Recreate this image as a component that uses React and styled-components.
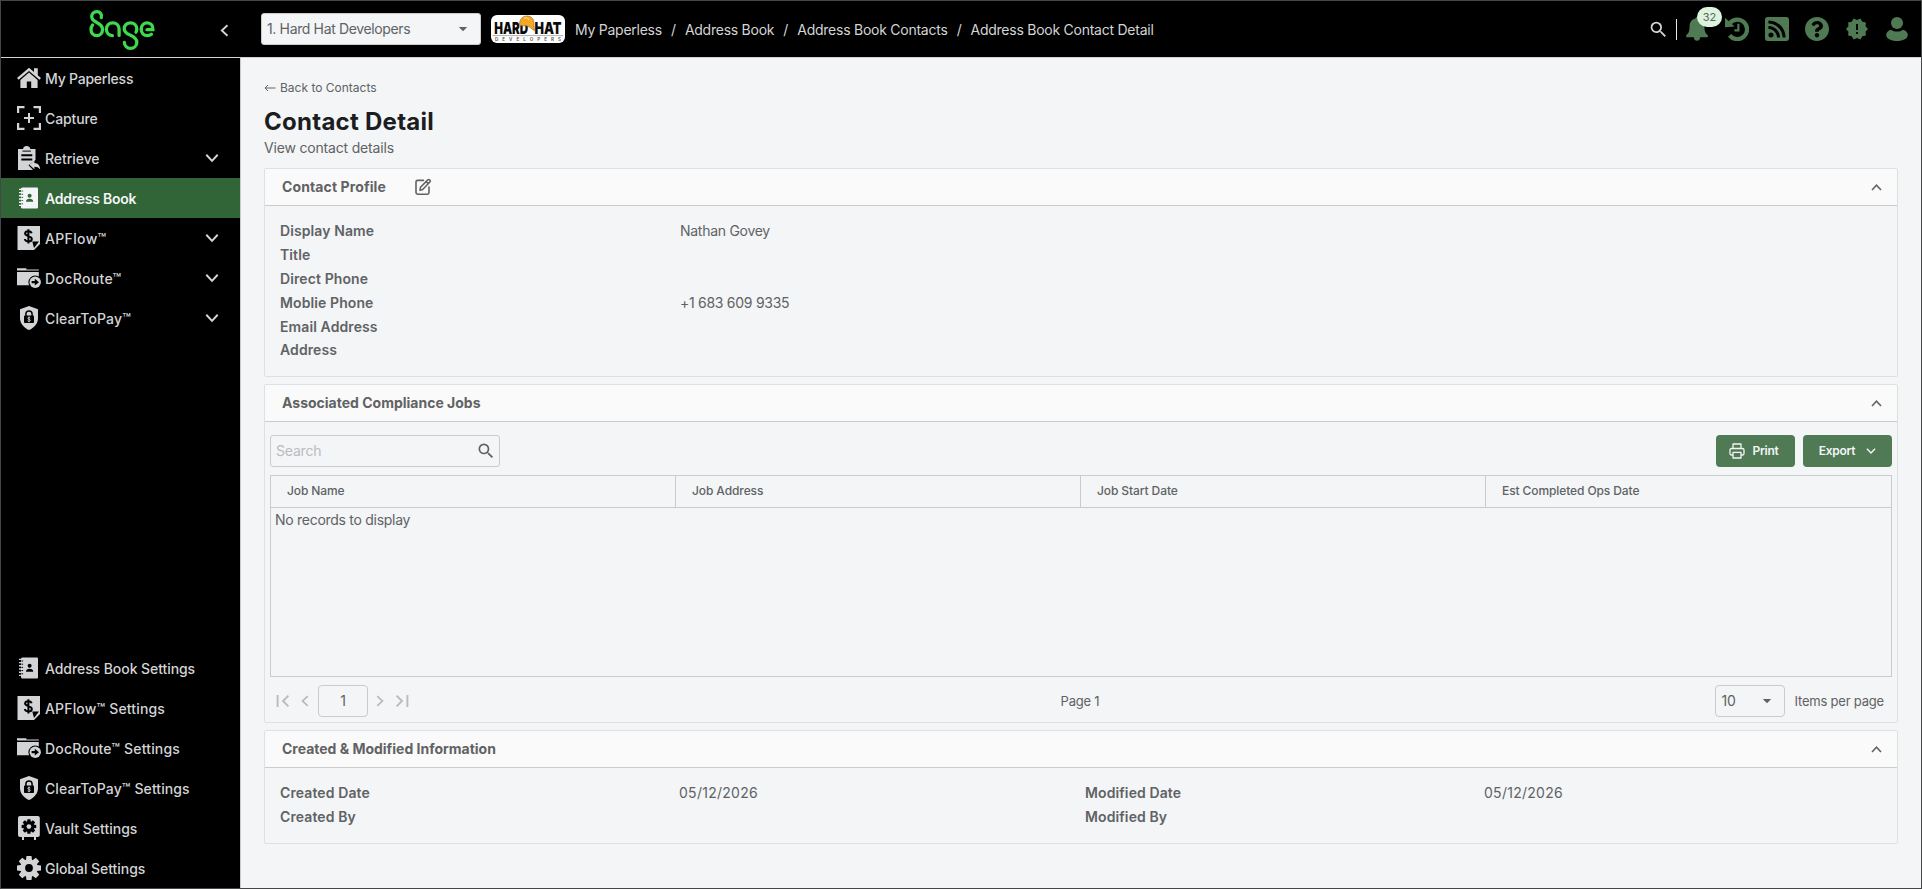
import React from "react";
import styled, { createGlobalStyle } from "styled-components";
import { FaQuestionCircle, FaRssSquare } from "react-icons/fa";
import { MdNewReleases, MdSearch } from "react-icons/md";

const c = {
  text: "#606264",
  bg: "#f3f5f7",
  line: "#c9cbcd",
  soft: "#dfe0e2",
  green: "#4f7a54",
  active: "#316437",
  nav: "#d3d4d6",
};

const GlobalStyle = createGlobalStyle`
  * { box-sizing: border-box; }
  body { margin: 0; background: ${c.bg}; }
  button, input { font: inherit; color: inherit; }
`;

/* ---------- shell ---------- */

const Shell = styled.div`
  height: 889px;
  width: 1922px;
  border: 1px solid #444648;
  display: flex;
  flex-direction: column;
  font: 400 14px/20px Inter, "Liberation Sans", sans-serif;
  color: ${c.text};
  background: ${c.bg};
  overflow: hidden;
`;

const Header = styled.header`
  height: 57px;
  flex: none;
  display: flex;
  align-items: center;
  background: #000;
  border-bottom: 1px solid #d3d2d4;
`;

const Brand = styled.div`
  width: 239px;
  height: 56px;
  flex: none;
  display: flex;
  align-items: center;
  padding: 2px 0 0 87px;
  gap: 62px;
`;

const Body = styled.div`
  flex: 1;
  min-height: 0;
  display: flex;
`;

const Sidebar = styled.nav`
  width: 240px;
  flex: none;
  background: #000;
  border-right: 1px solid ${c.line};
  display: flex;
  flex-direction: column;
  justify-content: space-between;
`;

const NavItem = styled.a`
  height: 40px;
  padding: 0 21px 0 16px;
  display: flex;
  align-items: center;
  gap: 4px;
  color: ${(p) => (p.$active ? "#f3f5f7" : c.nav)};
  background: ${(p) => (p.$active ? c.active : "transparent")};
  font-weight: ${(p) => (p.$active ? 600 : 500)};
  letter-spacing: ${(p) => p.$ls || 0}px;
  svg { flex: none; display: block; }
`;

const NavLabel = styled.span`
  flex: 1;
  padding-top: 1px;
  white-space: nowrap;
`;

/* ---------- header parts ---------- */

const CompanySelect = styled.div`
  width: 220px;
  height: 32px;
  margin-left: 21px;
  padding: 0 11px 0 5px;
  display: flex;
  align-items: center;
  justify-content: space-between;
  background: ${c.bg};
  border: 1px solid ${c.line};
  border-radius: 3px;
  letter-spacing: -0.36px;
`;

const CompanyLogo = styled.div`
  width: 74px;
  height: 28px;
  margin: 0 10px;
  background: #fff;
  border-radius: 6px;
  svg { display: block; }
`;

const Crumbs = styled.div`
  display: flex;
  align-items: center;
  color: ${c.nav};
  white-space: nowrap;
  padding-top: 2px;
  letter-spacing: -0.25px;
`;

const Slash = styled.span`
  width: 23px;
  text-align: center;
`;

const Actions = styled.div`
  margin-left: auto;
  padding-right: 12px;
  display: flex;
  align-items: center;
  gap: 16px;
  color: ${c.green};
  svg { display: block; }
`;

const SearchGroup = styled.div`
  display: flex;
  align-items: center;
  gap: 7px;
  margin-right: -8px;
  color: ${c.nav};
`;

const Divider = styled.span`
  width: 1px;
  height: 21px;
  background: #e3e4e5;
`;

const Bell = styled.div`
  position: relative;
  width: 24px;
  height: 24px;
`;

const Badge = styled.span`
  position: absolute;
  left: 12px;
  top: -10px;
  width: 25px;
  height: 20px;
  border-radius: 10px;
  background: #dcf3de;
  color: #5a635b;
  font-size: 11px;
  line-height: 20px;
  text-align: center;
`;

/* ---------- content ---------- */

const Main = styled.main`
  flex: 1;
  padding: 20px 23px 0 23px;
  display: flex;
  flex-direction: column;
`;

const BackLink = styled.a`
  display: flex;
  align-items: center;
  gap: 4px;
  font-size: 12px;
  height: 20px;
`;

const Title = styled.h1`
  margin: 9px 0 0;
  font-size: 24px;
  line-height: 30px;
  font-weight: 700;
  letter-spacing: 0.27px;
  color: #1b1d1f;
`;

const Subtitle = styled.p`
  margin: 1px 0 10px;
  letter-spacing: -0.18px;
`;

const Panel = styled.section`
  height: ${(p) => p.$h}px;
  margin-bottom: 7px;
  border: 1px solid ${c.soft};
  border-radius: 2px;
  flex: none;
`;

const PanelHead = styled.div`
  height: 37px;
  padding: 0 15px 0 17px;
  display: flex;
  align-items: center;
  background: #fafafa;
  border-bottom: 1px solid ${c.line};
  svg { display: block; }
`;

const PanelTitle = styled.h2`
  margin: 0 28px 0 0;
  flex: ${(p) => (p.$fill ? 1 : "none")};
  font-size: 14px;
  line-height: 20px;
  font-weight: 700;
  letter-spacing: ${(p) => p.$ls || 0}px;
`;

const HeadSpacer = styled.span`
  flex: 1;
`;

const Fields = styled.dl`
  margin: 0;
  padding: 13.6px 15px;
  display: grid;
  grid-template-columns: ${(p) => p.$cols};
  grid-auto-rows: 23.8px;
  align-items: center;
`;

const Label = styled.dt`
  font-weight: 600;
  letter-spacing: 0.1px;
`;

const Value = styled.dd`
  margin: 0;
  letter-spacing: ${(p) => p.$ls || 0}px;
`;

const Toolbar = styled.div`
  margin: 13px 5px 8px;
  height: 32px;
  display: flex;
  align-items: center;
  gap: 8px;
`;

const SearchBox = styled.div`
  width: 230px;
  height: 32px;
  margin-right: auto;
  padding: 0 3px 0 5px;
  display: flex;
  align-items: center;
  justify-content: space-between;
  border: 1px solid ${c.line};
  border-radius: 3px;
`;

const Placeholder = styled.span`
  color: #b9bcbf;
  letter-spacing: -0.2px;
`;

const Button = styled.button`
  width: ${(p) => p.$w}px;
  height: 32px;
  padding: 0 ${(p) => p.$pr || 0}px 0 0;
  border: 0;
  border-radius: 4px;
  background: ${c.green};
  color: #f3f5f7;
  font-size: 12px;
  font-weight: 600;
  letter-spacing: -0.3px;
  display: flex;
  align-items: center;
  justify-content: center;
  gap: ${(p) => p.$gap}px;
`;

const Table = styled.div`
  margin: 0 5px;
  height: 202px;
  border: 1px solid ${c.line};
`;

const TableHead = styled.div`
  height: 32px;
  display: grid;
  grid-template-columns: 404px 405px 405px 1fr;
  border-bottom: 1px solid ${c.line};
`;

const Th = styled.div`
  padding: 0 0 1px 16px;
  display: flex;
  align-items: center;
  font-size: 12px;
  font-weight: 500;
  letter-spacing: -0.1px;
  & + & { border-left: 1px solid ${c.line}; }
`;

const Empty = styled.div`
  padding: 2px 4px;
  letter-spacing: -0.28px;
`;

const Pager = styled.div`
  height: 48px;
  padding: 0 13px 0 11px;
  display: grid;
  grid-template-columns: 1fr auto 1fr;
  align-items: center;
  font-size: 13px;
  letter-spacing: -0.2px;
`;

const PagerGroup = styled.div`
  display: flex;
  align-items: center;
  justify-content: ${(p) => (p.$end ? "flex-end" : "flex-start")};
  gap: ${(p) => (p.$end ? 9 : 0)}px;
  color: ${(p) => (p.$end ? "inherit" : "#b9bbbe")};
`;

const PageBox = styled.span`
  width: 50px;
  height: 32px;
  margin: 0 6px 0 7px;
  display: flex;
  align-items: center;
  justify-content: center;
  border: 1px solid ${c.line};
  border-radius: 4px;
  color: ${c.text};
  font-size: 14px;
`;

const Gap = styled.span`
  width: ${(p) => p.$w}px;
`;

const SizeSelect = styled.span`
  width: 70px;
  height: 32px;
  padding: 0 11px 0 5px;
  display: flex;
  align-items: center;
  justify-content: space-between;
  border: 1px solid ${c.line};
  border-radius: 4px;
  font-size: 14px;
`;

/* ---------- drawings ---------- */

const SageLogo = () => (
  <svg width="68" height="44" viewBox="88 9 68 44" fill="none" stroke="#3ed94e" strokeWidth="3.3" strokeLinecap="round">
    <path d="M101.3 18.6 C102 15.2 100 12.6 96.9 12.6 C93.6 12.6 91.7 15 91.7 17.6 C91.7 21 94.2 22.3 97.2 23.8 C100.8 25.6 102.5 27.3 102.5 30.4 C102.5 34 100 36.6 96.8 36.6 C93.5 36.6 91 34 91 30.5 C91 28.8 91.6 27.2 92.6 26" />
    <path d="M112.4 36.6 C108.8 36.4 106.4 33.7 106.4 30.2 C106.4 26.5 109.1 23.8 112.7 23.8 C116.4 23.8 119.1 26.5 119.1 30.2 V36.4" />
    <path d="M136 33.2 C136.6 32.3 136.8 31.2 136.8 30 C136.8 26.4 134.2 23.8 130.5 23.8 C126.9 23.8 124.2 26.4 124.2 29.7 C124.2 33.2 126.9 34.6 130 36 C134 37.7 136.8 39.3 136.8 43.2 C136.8 46.8 134.1 49.4 130.5 49.4 C126.9 49.4 124.4 46.8 124.4 43.4" />
    <path d="M147 30.7 H152.9 C153.2 26.8 151 23.8 147.3 23.8 C143.8 23.8 141.2 26.5 141.2 30.2 C141.2 33.9 143.8 36.6 147.4 36.6 C149 36.6 150.3 36.1 151.4 35.2" />
  </svg>
);

const CompanyMark = () => (
  <svg width="74" height="28" viewBox="0 0 74 28">
    <g fontFamily="Inter, sans-serif">
      <text x="3.2" y="18.6" textLength="34" lengthAdjust="spacingAndGlyphs" fontWeight="900" fontSize="16.5" fill="#0b0b0b">HARD</text>
      <text x="43.5" y="18.6" textLength="27" lengthAdjust="spacingAndGlyphs" fontWeight="900" fontSize="16.5" fill="#0b0b0b">HAT</text>
      <text x="4" y="26.4" textLength="66" fontWeight="600" fontSize="4.6" fill="#555">DEVELOPERS</text>
    </g>
    <path d="M28.6 9 C28.6 4 32 1 36 1 C40.6 1 43.4 4.6 42.8 8.6 L43.4 15.6 C41.4 14.8 39.6 12.2 37 11.2 C34 10.2 31 11.4 29 10.4 Z" fill="#f2a826" stroke="#8a641c" strokeWidth=".6" />
    <path d="M33 3.2 C35 2 37 2.6 38 5" stroke="#ffd377" strokeWidth="1.3" fill="none" />
    <path d="M1.5 20.6 H72.5" stroke="#a9a9a9" strokeWidth=".9" />
  </svg>
);

const Chevron = ({ d = "down", w = 14, stroke = 2, color = "currentColor" }) => {
  const turn = { down: 0, left: 90, up: 180, right: 270 }[d];
  return (
    <svg width={w} height={w} viewBox="0 0 14 14" fill="none" stroke={color} strokeWidth={stroke}>
      <path d="M1.3 3.8 L7 9.9 L12.7 3.8" transform={`rotate(${turn} 7 7)`} />
    </svg>
  );
};

const Caret = () => (
  <svg width="12" height="6" viewBox="0 0 12 6">
    <path d="M1.8 1 H10.2 L6 5.2 Z" fill={c.text} />
  </svg>
);

const Icon = ({ children }) => (
  <svg width="24" height="24" viewBox="0 0 24 24" fill="currentColor">{children}</svg>
);

const HomeIcon = () => (
  <Icon>
    <path d="M12 1.8 L0 12 L1.6 13.8 L12 5 L22.4 13.8 L24 12 L20.8 9.2 V2.2 H17 V6 Z" />
    <path d="M12 6.6 L3.4 13.9 V22 H9.8 V15.5 H14.2 V22 H20.6 V13.9 Z" />
  </Icon>
);
const CaptureIcon = () => (
  <Icon>
    <path d="M0 0h7.5v2.2H2.2V7H0zM16.5 0H24v7h-2.2V2.2h-5.3zM0 17h2.2v4.8h5.3V24H0zM21.8 17H24v7h-7.5v-2.2h5.3zM11 7h2v4h4v2h-4v4h-2v-4H7v-2h4z" />
  </Icon>
);
const RetrieveIcon = () => (
  <Icon>
    <path fillRule="evenodd" d="M1 3 H6 C6.3 1 7.6 0 9.6 0 S13 1 13.4 3 H18.5 V14 L11.5 19.2 L16 24 H1 Z M4.3 8.2 V10.2 H15.3 V8.2 Z M4.3 12.4 V14.4 H15.3 V12.4 Z" />
    <path d="M12.4 18.8 L17.4 14.4 V17 C21 17.2 23 19.4 23.2 23.6 C21.6 21.4 20 20.8 17.4 20.8 V23.2 Z" />
    <path d="M5.5 4.6h8.4v1h-8.4z" fill="#000" />
  </Icon>
);
const BookIcon = ({ hole = "#000" }) => (
  <Icon>
    <path d="M5.5 1.5 H20 Q21 1.5 21 2.5 V21.5 Q21 22.5 20 22.5 H5.5 Q4 22.5 4 21 V3 Q4 1.5 5.5 1.5 Z" />
    <path d="M2 3.4h4M2 6.6h4M2 9.8h4M2 13h4M2 16.2h4M2 19.4h4" stroke="currentColor" strokeWidth="1.4" />
    <path d="M4.5 5h1.6M4.5 8.2h1.6M4.5 11.4h1.6M4.5 14.6h1.6M4.5 17.8h1.6" stroke={hole} strokeWidth="1" />
    <circle cx="12.6" cy="9.8" r="2" fill={hole} />
    <path d="M9 15.8 C9 13.4 10.5 12.7 12.6 12.7 S16.2 13.4 16.2 15.8 Z" fill={hole} />
  </Icon>
);
const FlowIcon = () => (
  <Icon>
    <path d="M.5 0 H23 V18 L17 24 H.5 Z" />
    <path d="M15.3 15.6 H22 L17 22 Z" fill="#000" />
    <path d="M14.6 7.3 C14.3 5.9 13 5.2 11.4 5.2 C9.4 5.2 8.1 6.1 8.1 7.6 C8.1 10.9 14.8 9.3 14.8 12.9 C14.8 14.5 13.4 15.4 11.4 15.4 C9.5 15.4 8.1 14.6 7.9 13 M11.4 3.2 V17.4" fill="none" stroke="#000" strokeWidth="2" />
  </Icon>
);
const FolderIcon = () => (
  <Icon>
    <path d="M0 2.2 H9.3 V3.4 H21.8 V4.6 H0 Z M0 6 H21.8 V19.3 H0 Z" />
    <circle cx="18.2" cy="16.2" r="6.8" fill="#000" />
    <circle cx="18.2" cy="16.2" r="5.7" />
    <path d="M14.6 15.1 H17.8 V12.8 L22 16.2 L17.8 19.6 V17.3 H14.6 Z" fill="#000" />
  </Icon>
);
const ShieldIcon = () => (
  <Icon>
    <path d="M12 0 L21 3.2 V12 C21 17.5 17 22 12 24 C7 22 3 17.5 3 12 V3.2 Z" />
    <rect x="7" y="9.6" width="10" height="7.4" rx=".8" fill="#000" />
    <path d="M8.9 10 V8 C8.9 3.9 15.1 3.9 15.1 8 V10" fill="none" stroke="#000" strokeWidth="1.5" />
    <path d="M13.3 11.9 C12.6 11 10.8 11.2 10.8 12.3 C10.8 13.5 13.3 13 13.3 14.4 C13.3 15.5 11.3 15.8 10.6 14.7 M12 10.6 V16.2" fill="none" stroke="currentColor" strokeWidth=".9" />
  </Icon>
);
const teeth = [0, 45, 90, 135, 180, 225, 270, 315];
const Gear = ({ fill = "currentColor", hole = "#000" }) => (
  <g fill={fill}>
    {teeth.map((a) => (
      <path key={a} d="M9.5 0 H14.5 L15.3 6 H8.7 Z" transform={`rotate(${a} 12 12)`} />
    ))}
    <circle cx="12" cy="12" r="8.8" />
    <circle cx="12" cy="12" r="3.9" fill={hole} />
  </g>
);
const GearIcon = () => <Icon><Gear /></Icon>;
const VaultIcon = () => (
  <Icon>
    <path d="M3 0 H20.8 Q22.8 0 22.8 2 V19 Q22.8 21 20.8 21 H19 V24 H17 V21 H7 V24 H5 V21 H3 Q1 21 1 19 V2 Q1 0 3 0 Z" />
    <g transform="translate(4.6 3.2) scale(.61)"><Gear fill="#000" hole={c.nav} /></g>
  </Icon>
);

const BellIcon = () => (
  <Icon>
    <path d="M12 0 C12.9 0 13.5 .7 13.5 1.6 C17.4 2.4 19.4 5.3 19.4 9.2 C19.4 14.2 20.6 16.4 22.8 18.2 V20.2 H15.2 C15 22.6 13.8 23.8 12 23.8 S9 22.6 8.8 20.2 H1.2 V18.2 C3.4 16.4 4.6 14.2 4.6 9.2 C4.6 5.3 6.6 2.4 10.5 1.6 C10.5 .7 11.1 0 12 0 Z" />
  </Icon>
);
const HistoryIcon = () => (
  <Icon>
    <path d="M5 5.8 A9.8 9.8 0 1 1 4.6 18.4" fill="none" stroke="currentColor" strokeWidth="4.2" />
    <path d="M0 .8 L9.6 9.6 L0 10.2 Z" />
    <path d="M13.4 6.8 V13.3 H9.4" fill="none" stroke="currentColor" strokeWidth="2.2" />
  </Icon>
);
const UserIcon = () => (
  <Icon>
    <circle cx="12" cy="6" r="6" />
    <path d="M6 12.7 C7.6 14 9.6 14.6 12 14.6 S16.4 14 18 12.7 C21 13.6 22.8 15.6 22.8 18 C22.8 21.6 18.2 24 12 24 S1.2 21.6 1.2 18 C1.2 15.6 3 13.6 6 12.7 Z" />
  </Icon>
);
const EditIcon = () => (
  <svg width="18" height="18" viewBox="0 0 18 18" fill="none" stroke={c.text} strokeWidth="1.6" strokeLinejoin="round" strokeLinecap="round">
    <path d="M9.5 2.4 H3.6 Q2 2.4 2 4 V14.6 Q2 16.2 3.6 16.2 H13.4 Q15 16.2 15 14.6 V9" />
    <path d="M6 12.2 L6.5 9.3 L13.8 1.9 Q14.7 1.1 15.6 1.9 L15.9 2.2 Q16.8 3.1 15.9 4 L8.7 11.5 Z M12.2 3.6 L14.3 5.6" />
  </svg>
);
const PrintIcon = () => (
  <svg width="16" height="16" viewBox="0 0 16 16" fill="none" stroke="currentColor" strokeWidth="1.3" strokeLinejoin="round">
    <path d="M4 5.5 V1 H12 V5.5 M4 12 H2.6 Q1 12 1 10.4 V7.1 Q1 5.5 2.6 5.5 H13.4 Q15 5.5 15 7.1 V10.4 Q15 12 13.4 12 H12 M4 9.3 H12 V15 H4 Z" />
  </svg>
);
const EdgeIcon = ({ last }) => (
  <svg width="14" height="14" viewBox="0 0 14 14" fill="none" stroke="currentColor" strokeWidth="1.9">
    <g transform={last ? "rotate(180 7 7)" : undefined}>
      <path d="M1.6 1 V13 M12.4 1.6 L7 7 L12.4 12.4" />
    </g>
  </svg>
);
const BackArrow = () => (
  <svg width="12" height="8" viewBox="0 0 12 8" fill="none" stroke={c.text} strokeWidth="1">
    <path d="M11.5 4 H1 M4 1 L1 4 L4 7" />
  </svg>
);

/* ---------- data ---------- */

const topNav = [
  { label: "My Paperless", icon: <HomeIcon />, ls: -0.22 },
  { label: "Capture", icon: <CaptureIcon />, ls: -0.1 },
  { label: "Retrieve", icon: <RetrieveIcon />, more: true, ls: -0.05 },
  { label: "Address Book", icon: <BookIcon hole={c.active} />, active: true, ls: -0.24 },
  { label: "APFlow™", icon: <FlowIcon />, more: true, ls: 0.35 },
  { label: "DocRoute™", icon: <FolderIcon />, more: true, ls: 0.35 },
  { label: "ClearToPay™", icon: <ShieldIcon />, more: true, ls: 0.12 },
];
const bottomNav = [
  { label: "Address Book Settings", icon: <BookIcon />, ls: -0.07 },
  { label: "APFlow™ Settings", icon: <FlowIcon />, ls: 0.16 },
  { label: "DocRoute™ Settings", icon: <FolderIcon />, ls: 0.18 },
  { label: "ClearToPay™ Settings", icon: <ShieldIcon />, ls: 0.09 },
  { label: "Vault Settings", icon: <VaultIcon /> },
  { label: "Global Settings", icon: <GearIcon />, ls: -0.05 },
];
const crumbs = ["My Paperless", "Address Book", "Address Book Contacts", "Address Book Contact Detail"];
const profile = [
  ["Display Name", "Nathan Govey"],
  ["Title", ""],
  ["Direct Phone", ""],
  ["Moblie Phone", "+1 683 609 9335"],
  ["Email Address", ""],
  ["Address", ""],
];
const columns = ["Job Name", "Job Address", "Job Start Date", "Est Completed Ops Date"];

const NavList = ({ items }) => (
  <div>
    {items.map((i) => (
      <NavItem key={i.label} $active={i.active} $ls={i.ls}>
        {i.icon}
        <NavLabel>{i.label}</NavLabel>
        {i.more && <Chevron />}
      </NavItem>
    ))}
  </div>
);

export default function App() {
  return (
    <>
      <GlobalStyle />
      <Shell>
        <Header>
          <Brand>
            <SageLogo />
            <Chevron d="left" w={13} color={c.nav} />
          </Brand>
          <CompanySelect>1. Hard Hat Developers<Caret /></CompanySelect>
          <CompanyLogo><CompanyMark /></CompanyLogo>
          <Crumbs>
            {crumbs.map((t, i) => (
              <React.Fragment key={t}>
                {i > 0 && <Slash>/</Slash>}
                <span>{t}</span>
              </React.Fragment>
            ))}
          </Crumbs>
          <Actions>
            <SearchGroup>
              <MdSearch size={21} />
              <Divider />
            </SearchGroup>
            <Bell><BellIcon /><Badge>32</Badge></Bell>
            <HistoryIcon />
            <FaRssSquare size={24} viewBox="0 32 448 448" />
            <FaQuestionCircle size={24} viewBox="8 8 496 496" />
            <MdNewReleases size={24} />
            <UserIcon />
          </Actions>
        </Header>
        <Body>
          <Sidebar>
            <NavList items={topNav} />
            <NavList items={bottomNav} />
          </Sidebar>
          <Main>
            <BackLink><BackArrow />Back to Contacts</BackLink>
            <Title>Contact Detail</Title>
            <Subtitle>View contact details</Subtitle>

            <Panel $h={209}>
              <PanelHead>
                <PanelTitle $ls={0.11}>Contact Profile</PanelTitle>
                <EditIcon />
                <HeadSpacer />
                <Chevron d="up" w={11} />
              </PanelHead>
              <Fields $cols="400px 1fr">
                {profile.map(([k, v]) => (
                  <React.Fragment key={k}>
                    <Label>{k}</Label>
                    <Value $ls={-0.28}>{v}</Value>
                  </React.Fragment>
                ))}
              </Fields>
            </Panel>

            <Panel $h={339}>
              <PanelHead>
                <PanelTitle $fill>Associated Compliance Jobs</PanelTitle>
                <Chevron d="up" w={11} />
              </PanelHead>
              <Toolbar>
                <SearchBox>
                  <Placeholder>Search</Placeholder>
                  <MdSearch size={20} />
                </SearchBox>
                <Button $w={79} $gap={8} $pr={4}><PrintIcon />Print</Button>
                <Button $w={89} $gap={11}>Export<Chevron w={10} /></Button>
              </Toolbar>
              <Table>
                <TableHead>
                  {columns.map((t) => <Th key={t}>{t}</Th>)}
                </TableHead>
                <Empty>No records to display</Empty>
              </Table>
              <Pager>
                <PagerGroup>
                  <EdgeIcon />
                  <Gap $w={9} />
                  <Chevron d="left" w={12} />
                  <PageBox>1</PageBox>
                  <Chevron d="right" w={12} />
                  <Gap $w={9} />
                  <EdgeIcon last />
                </PagerGroup>
                <span>Page 1</span>
                <PagerGroup $end>
                  <SizeSelect>10<Caret /></SizeSelect>
                  <span>Items per page</span>
                </PagerGroup>
              </Pager>
            </Panel>

            <Panel $h={114}>
              <PanelHead>
                <PanelTitle $fill $ls={-0.01}>Created &amp; Modified Information</PanelTitle>
                <Chevron d="up" w={11} />
              </PanelHead>
              <Fields $cols="399px 406px 399px 1fr">
                <Label>Created Date</Label><Value $ls={0.27}>05/12/2026</Value>
                <Label>Modified Date</Label><Value $ls={0.27}>05/12/2026</Value>
                <Label>Created By</Label><Value />
                <Label>Modified By</Label><Value />
              </Fields>
            </Panel>
          </Main>
        </Body>
      </Shell>
    </>
  );
}
